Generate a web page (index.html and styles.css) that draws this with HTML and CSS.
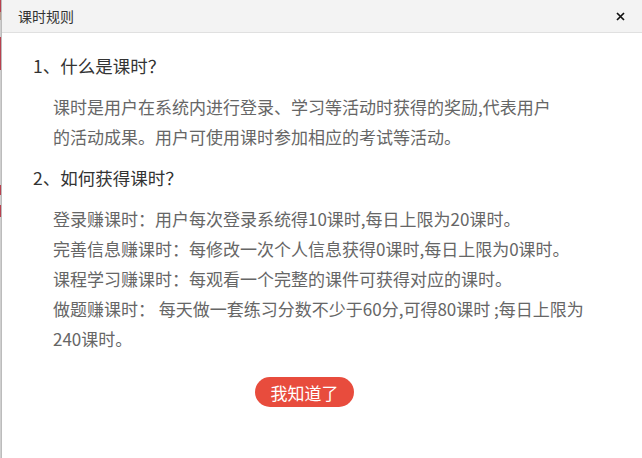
FILE: index.html
```html
<!DOCTYPE html>
<html lang="zh-CN">
<head>
    <meta charset="UTF-8">
    <meta name="viewport" content="width=device-width, initial-scale=1.0">
    <title>课时规则</title>
    <link rel="stylesheet" href="styles.css">
</head>
<body>
    <div class="dialog">
        <div class="dialog-header">
            <span class="dialog-title">课时规则</span>
            <span class="dialog-close">
                <svg width="9" height="9" viewBox="0 0 9 9"><path d="M1 1L8 8M8 1L1 8" stroke="#111" stroke-width="1.7" fill="none"/></svg>
            </span>
        </div>
        <div class="dialog-body">
            <h3 class="rule-title">1、什么是课时？</h3>
            <p class="rule-text rule-intro">课时是用户在系统内进行登录、学习等活动时获得的奖励,代表用户的活动成果。用户可使用课时参加相应的考试等活动。</p>
            <h3 class="rule-title second">2、如何获得课时？</h3>
            <div class="rule-text rule-list">
                <p>登录赚课时：用户每次登录系统得10课时,每日上限为20课时。</p>
                <p>完善信息赚课时：每修改一次个人信息获得0课时,每日上限为0课时。</p>
                <p>课程学习赚课时：每观看一个完整的课件可获得对应的课时。</p>
                <p>做题赚课时： 每天做一套练习分数不少于60分,可得80课时 ;每日上限为240课时。</p>
            </div>
            <div class="dialog-footer">
                <button class="ok-btn">我知道了</button>
            </div>
        </div>
    </div>
</body>
</html>
```

FILE: styles.css
```css
html, body {
    margin: 0;
    height: 100%;
}
body {
    font-family: "Noto Sans CJK SC", "Microsoft YaHei", sans-serif;
    padding-left: 1px;
    box-sizing: border-box;
    /* page behind the dialog peeking through on the left */
    background: linear-gradient(to bottom,
        #b8414f 0, #b8414f 12px, #b59a8a 12px, #b59a8a 20px, #cfcfcf 20px, #cfcfcf 37px,
        #b8414f 37px, #b8414f 70px, #cfcfcf 70px, #cfcfcf 185px,
        #b8414f 185px, #b8414f 195px, #cfcfcf 195px, #cfcfcf 205px,
        #b8414f 205px, #b8414f 217px, #cfcfcf 217px);
}
.dialog {
    height: 100%;
    background: #fff;
    border-left: 1px solid #bcbcbc;
    box-sizing: border-box;
}
.dialog-header {
    height: 32px;
    display: flex;
    align-items: center;
    justify-content: space-between;
    padding: 0 17px 0 16px;
    background: #f3f3f3;
    border-bottom: 1px solid #e0e0e0;
}
.dialog-title {
    font-size: 14px;
    color: #333;
}
.dialog-close {
    display: flex;
    cursor: pointer;
}
.dialog-body {
    padding: 18px 0 0 31px;
}
.rule-title {
    margin: 0;
    font-size: 17.5px;
    font-weight: normal;
    line-height: 30px;
    color: #333;
}
.rule-title.second {
    margin-top: 11px;
}
.rule-text {
    margin: 11px 0 0 20px;
    font-size: 17px;
    line-height: 30px;
    color: #666;
}
.rule-intro {
    width: 505px;
}
.rule-list {
    width: 545px;
}
.rule-list p {
    margin: 0;
}
.dialog-footer {
    margin-top: 23px;
    padding-right: 66px;
    text-align: center;
}
.ok-btn {
    height: 30px;
    width: 99px;
    padding: 0;
    border: none;
    border-radius: 15px;
    background: #e84c3d;
    color: #fff;
    font-family: inherit;
    font-size: 17px;
    cursor: pointer;
}
```
